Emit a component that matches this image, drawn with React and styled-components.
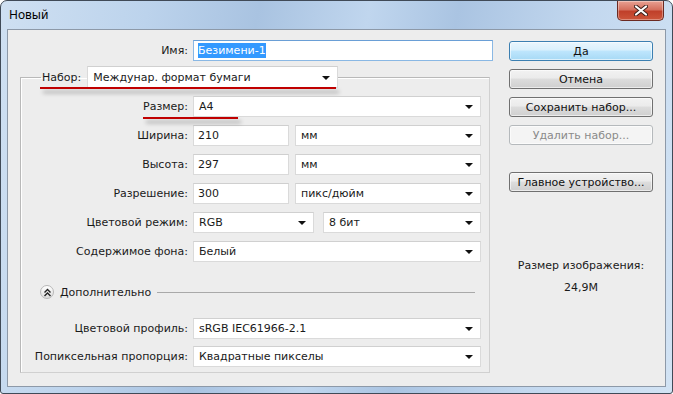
import React from "react";
import styled, { createGlobalStyle } from "styled-components";

const GlobalStyle = createGlobalStyle`
  html, body {
    margin: 0;
    padding: 0;
    background: #ffffff;
  }
  body {
    font-family: "DejaVu Sans", "Noto Sans", sans-serif;
    font-size: 11px;
    color: #1a1a1a;
  }
`;

function App() {
  return (
    <>
      <GlobalStyle />
      <Window>
        <TitleBar>
          <Title>Новый</Title>
          <CloseButton>
            <svg width="14" height="11" viewBox="0 0 14 11">
              <path d="M2 1.5 L12 9.5 M12 1.5 L2 9.5" stroke="#3b1f1a" strokeWidth="4" strokeLinecap="round" />
              <path d="M2 1.5 L12 9.5 M12 1.5 L2 9.5" stroke="#ffffff" strokeWidth="2.2" strokeLinecap="round" />
            </svg>
          </CloseButton>
        </TitleBar>
        <Panel>
          <LeftColumn>
            <Row $top={10}>
              <Label $width={180}>Имя:</Label>
              <TextBox $width={300} $focused>
                <Selected>Безимени-1</Selected>
              </TextBox>
            </Row>

            <GroupBox>
              <Legend>
                <Marked $left={-1} $width={296} $top={21}>
                  <PresetLabel>Набор:</PresetLabel>
                  <Select $width={251} $height={22}>Междунар. формат бумаги</Select>
                </Marked>
              </Legend>

              <Marked $left={122} $width={95} $top={21} $mt={14}>
                <Row>
                  <Label $width={167}>Размер:</Label>
                  <Select $width={288}>A4</Select>
                </Row>
              </Marked>
              <Row $top={8}>
                <Label $width={167}>Ширина:</Label>
                <TextBox $width={96}>210</TextBox>
                <Select $width={186} $ml={1}>мм</Select>
              </Row>
              <Row $top={8}>
                <Label $width={167}>Высота:</Label>
                <TextBox $width={96}>297</TextBox>
                <Select $width={186} $ml={1}>мм</Select>
              </Row>
              <Row $top={8}>
                <Label $width={167}>Разрешение:</Label>
                <TextBox $width={96}>300</TextBox>
                <Select $width={186} $ml={1}>пикс/дюйм</Select>
              </Row>
              <Row $top={8}>
                <Label $width={167}>Цветовой режим:</Label>
                <Select $width={121}>RGB</Select>
                <Select $width={158} $ml={4}>8 бит</Select>
              </Row>
              <Row $top={8}>
                <Label $width={167}>Содержимое фона:</Label>
                <Select $width={288}>Белый</Select>
              </Row>

              <Advanced>
                <ToggleCircle>
                  <svg width="9" height="9" viewBox="0 0 9 9">
                    <path d="M1.5 4.5 L4.5 1.5 L7.5 4.5 M1.5 8 L4.5 5 L7.5 8" fill="none" stroke="#222" strokeWidth="1.4" />
                  </svg>
                </ToggleCircle>
                <AdvancedText>Дополнительно</AdvancedText>
                <Rule />
              </Advanced>

              <Row $top={18}>
                <Label $width={167}>Цветовой профиль:</Label>
                <Select $width={288}>sRGB IEC61966-2.1</Select>
              </Row>
              <Row $top={7}>
                <Label $width={167}>Попиксельная пропорция:</Label>
                <Select $width={288}>Квадратные пикселы</Select>
              </Row>
            </GroupBox>
          </LeftColumn>

          <RightColumn>
            <Button $variant="default">Да</Button>
            <Button>Отмена</Button>
            <Button>Сохранить набор...</Button>
            <Button $variant="disabled">Удалить набор...</Button>
            <Button $mt={19}>Главное устройство...</Button>
            <SizeInfo>
              <div>Размер изображения:</div>
              <SizeValue>24,9M</SizeValue>
            </SizeInfo>
          </RightColumn>
        </Panel>
      </Window>
    </>
  );
}

function Select({ children, ...rest }) {
  return (
    <SelectBox {...rest}>
      <span>{children}</span>
      <Arrow />
    </SelectBox>
  );
}

export default App;

const Window = styled.div`
  width: 673px;
  height: 394px;
  box-sizing: border-box;
  display: flex;
  flex-direction: column;
  border: 1px solid #404a57;
  border-radius: 7px 7px 3px 3px;
  background: linear-gradient(
    100deg,
    #cfe0f2 0%,
    #bcd3ec 20%,
    #a9c3e1 35%,
    #c0d6ee 50%,
    #aac4e2 62%,
    #c3d8ef 80%,
    #d2e3f4 100%
  );
  padding: 0 6px 6px 6px;
  overflow: hidden;
`;

const TitleBar = styled.div`
  height: 28px;
  display: flex;
  justify-content: space-between;
  align-items: flex-start;
`;

const Title = styled.div`
  font-family: "Noto Sans", "DejaVu Sans", sans-serif;
  font-size: 12px;
  color: #000;
  padding: 5px 0 0 2px;
`;

const CloseButton = styled.div`
  width: 45px;
  height: 19px;
  margin-right: 2px;
  display: flex;
  align-items: center;
  justify-content: center;
  border: 1px solid #6b2a22;
  border-top: none;
  border-radius: 0 0 5px 5px;
  background: linear-gradient(180deg, #e8a193 0%, #d4705e 45%, #c0402a 55%, #cc553a 100%);
  box-shadow: inset 0 0 0 1px rgba(255, 255, 255, 0.35);
`;

const Panel = styled.div`
  flex: 1;
  display: grid;
  grid-template-columns: 1fr 144px;
  column-gap: 12px;
  padding-right: 12px;
  background: #ededed;
  border: 1px solid #8d99a8;
`;

const LeftColumn = styled.div`
  display: flex;
  flex-direction: column;
`;

const RightColumn = styled.div`
  display: flex;
  flex-direction: column;
  gap: 8px;
  padding-top: 11px;
`;

const Row = styled.div`
  display: flex;
  align-items: center;
  gap: 5px;
  margin-top: ${(p) => p.$top || 0}px;
`;

const Label = styled.div`
  width: ${(p) => p.$width}px;
  text-align: right;
  white-space: nowrap;
  color: #1a1a1a;
`;

const PresetLabel = styled.div`
  padding: 0 6px 0 1px;
  white-space: nowrap;
`;

const TextBox = styled.div`
  width: ${(p) => p.$width}px;
  height: 21px;
  box-sizing: border-box;
  display: flex;
  align-items: center;
  padding-left: 4px;
  background: #fff;
  border: 1px solid ${(p) => (p.$focused ? "#8ab8e4" : "#dadada")};
  border-top-color: ${(p) => (p.$focused ? "#6a9fd6" : "#cfcfcf")};
  white-space: nowrap;
`;

const Selected = styled.span`
  background: #3399ff;
  color: #fff;
  padding: 1px 0;
`;

const SelectBox = styled.div`
  width: ${(p) => p.$width}px;
  height: ${(p) => p.$height || 21}px;
  margin-left: ${(p) => p.$ml || 0}px;
  box-sizing: border-box;
  display: flex;
  align-items: center;
  justify-content: space-between;
  padding: 0 7px 0 5px;
  background: #fff;
  border: 1px solid #dadada;
  border-top-color: #d0d0d0;
  white-space: nowrap;
`;

const Arrow = styled.div`
  width: 0;
  height: 0;
  border-left: 4px solid transparent;
  border-right: 4px solid transparent;
  border-top: 4px solid #111;
  margin-top: 1px;
`;

const GroupBox = styled.fieldset`
  margin: 5px 0 0 12px;
  width: 470px;
  height: 307px;
  box-sizing: border-box;
  padding: 0;
  border: 1px solid #b9b9b9;
  border-right-color: #d0d0d0;
  border-bottom-color: #d0d0d0;
  box-shadow: inset 1px 1px 0 #ffffff;
`;

const Legend = styled.legend`
  margin: 0 0 -6px 20px;
  padding: 0;
`;

const Marked = styled.div`
  position: relative;
  display: flex;
  align-items: center;
  margin-top: ${(p) => p.$mt || 0}px;
  &::after {
    content: "";
    position: absolute;
    left: ${(p) => p.$left}px;
    width: ${(p) => p.$width}px;
    top: ${(p) => p.$top}px;
    height: 2px;
    background: #c00000;
    box-shadow: 3px 4px 4px rgba(0, 0, 0, 0.35);
  }
`;

const Advanced = styled.div`
  display: grid;
  grid-template-columns: 14px auto 1fr;
  align-items: center;
  column-gap: 6px;
  margin: 22px 14px 0 19px;
  height: 16px;
`;

const ToggleCircle = styled.div`
  width: 14px;
  height: 14px;
  box-sizing: border-box;
  border-radius: 50%;
  border: 1px solid #b8b8b8;
  background: linear-gradient(180deg, #ffffff, #dcdcdc);
  display: flex;
  align-items: center;
  justify-content: center;
`;

const AdvancedText = styled.div`
  white-space: nowrap;
`;

const Rule = styled.div`
  height: 1px;
  background: #a9a9a9;
`;

const Button = styled.div`
  height: 20px;
  box-sizing: border-box;
  margin-top: ${(p) => p.$mt || 0}px;
  display: flex;
  align-items: center;
  justify-content: center;
  border-radius: 3px;
  white-space: nowrap;
  border: 1px solid ${(p) =>
    p.$variant === "default" ? "#3c7fb1" : p.$variant === "disabled" ? "#b5b9bc" : "#707070"};
  color: ${(p) => (p.$variant === "disabled" ? "#8a8a8a" : "#111")};
  background: ${(p) =>
    p.$variant === "default"
      ? "linear-gradient(180deg, #eaf6fd 0%, #d9f0fc 45%, #bee6fd 50%, #a7d9f5 100%)"
      : p.$variant === "disabled"
      ? "#f4f4f4"
      : "linear-gradient(180deg, #f2f2f2 0%, #ebebeb 45%, #dddddd 50%, #cfcfcf 100%)"};
  box-shadow: inset 0 0 0 1px rgba(255, 255, 255, 0.6);
`;

const SizeInfo = styled.div`
  margin-top: 59px;
  text-align: center;
  color: #1a1a1a;
`;

const SizeValue = styled.div`
  margin-top: 9px;
`;
